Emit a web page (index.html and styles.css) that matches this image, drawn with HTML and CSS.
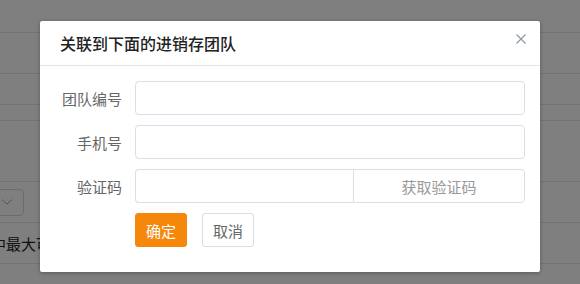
FILE: index.html
```html
<!DOCTYPE html>
<html lang="zh-CN">
<head>
  <meta charset="UTF-8" />
  <title>关联团队</title>
  <link rel="stylesheet" href="styles.css">
</head>
<body>
  <div class="page">
    <div class="page-row h32"></div>
    <div class="page-row h41"></div>
    <div class="page-row h31"></div>
    <div class="page-row h16"></div>
    <div class="page-row h61"></div>
    <div class="page-row h41 row-select">
      <div class="select-box">
        <svg width="12" height="8" viewBox="0 0 12 8"><path d="M1 1.5 L6 6 L11 1.5" fill="none" stroke="#aaa" stroke-width="1"/></svg>
      </div>
    </div>
    <div class="page-row h41 row-text"><span class="page-text">其中最大可</span></div>
    <div class="page-row h21"></div>
  </div>

  <div class="mask"></div>

  <div class="dialog">
    <div class="dialog-header">
      <span class="dialog-title">关联到下面的进销存团队</span>
      <svg class="dialog-close" width="10" height="10" viewBox="0 0 10 10"><path d="M0.5 0.5 L9.5 9.5 M9.5 0.5 L0.5 9.5" stroke="#8a94a6" stroke-width="1.1" fill="none"/></svg>
    </div>
    <div class="dialog-body">
      <div class="form-row">
        <label class="form-label">团队编号</label>
        <input class="form-input" type="text">
      </div>
      <div class="form-row">
        <label class="form-label">手机号</label>
        <input class="form-input" type="text">
      </div>
      <div class="form-row">
        <label class="form-label">验证码</label>
        <div class="input-group">
          <input class="form-input group-input" type="text">
          <button class="code-btn">获取验证码</button>
        </div>
      </div>
      <div class="form-row">
        <span class="form-label"></span>
        <div class="btns">
          <button class="btn btn-primary">确定</button>
          <button class="btn btn-default">取消</button>
        </div>
      </div>
    </div>
  </div>
</body>
</html>
```

FILE: styles.css
```css
* {
  box-sizing: border-box;
}

body {
  margin: 0;
  width: 580px;
  height: 284px;
  overflow: hidden;
  position: relative;
  font-family: "Noto Sans CJK SC", "Liberation Sans", sans-serif;
  background: #fff;
}

.page-row {
  border-bottom: 1px solid #e6e6e6;
  position: relative;
}

.h32 { height: 33px; }
.h41 { height: 41px; }
.h31 { height: 31px; }
.h16 { height: 16px; }
.h61 { height: 61px; }
.h21 { height: 21px; border-bottom: none; }

.row-select {
  display: flex;
  align-items: center;
}

.select-box {
  width: 48px;
  height: 27px;
  margin-left: -24px;
  border: 1px solid #d8d8d8;
  border-radius: 4px;
  display: flex;
  justify-content: flex-end;
  align-items: center;
  padding-right: 10px;
}

.row-text {
  display: flex;
  align-items: center;
}

.page-text {
  margin-left: -24px;
  font-size: 15px;
  color: #222;
}

.mask {
  position: absolute;
  inset: 0;
  background: rgba(0, 0, 0, 0.5);
}

.dialog {
  position: absolute;
  left: 40px;
  top: 21px;
  width: 500px;
  height: 251px;
  background: #fff;
  border-radius: 2px;
  box-shadow: 0 1px 4px rgba(0, 0, 0, 0.3);
}

.dialog-header {
  height: 45px;
  padding: 0 14px 0 20px;
  border-bottom: 1px solid #e3e3e8;
  display: flex;
  align-items: center;
  justify-content: space-between;
}

.dialog-title {
  font-size: 16px;
  color: #222;
  font-weight: 500;
  margin-top: -1px;
}

.dialog-close {
  margin-top: -8px;
}

.dialog-body {
  padding: 15px 15px 0 0;
}

.form-row {
  display: flex;
  align-items: center;
  margin-bottom: 10px;
}

.form-label {
  width: 82px;
  margin-right: 13px;
  text-align: right;
  font-size: 15px;
  color: #666;
}

.form-input {
  flex: 1;
  height: 34px;
  border: 1px solid #dcdde6;
  border-radius: 4px;
  outline: none;
  font-size: 14px;
  padding: 0 10px;
}

.input-group {
  flex: 1;
  display: flex;
  height: 34px;
}

.group-input {
  border-radius: 4px 0 0 4px;
  border-right: none;
}

.code-btn {
  width: 172px;
  height: 34px;
  border: 1px solid #dcdde6;
  border-radius: 0 4px 4px 0;
  background: #fff;
  font-family: inherit;
  font-size: 15px;
  color: #999;
  padding: 0;
}

.btns {
  display: flex;
  gap: 15px;
}

.btn {
  width: 52px;
  height: 34px;
  border-radius: 3px;
  font-family: inherit;
  font-size: 15px;
  padding: 0;
}

.btn-primary {
  background: #f5870b;
  border: 1px solid #f5870b;
  color: #fff;
}

.btn-default {
  background: #fff;
  border: 1px solid #dcdde6;
  color: #666;
}
```
